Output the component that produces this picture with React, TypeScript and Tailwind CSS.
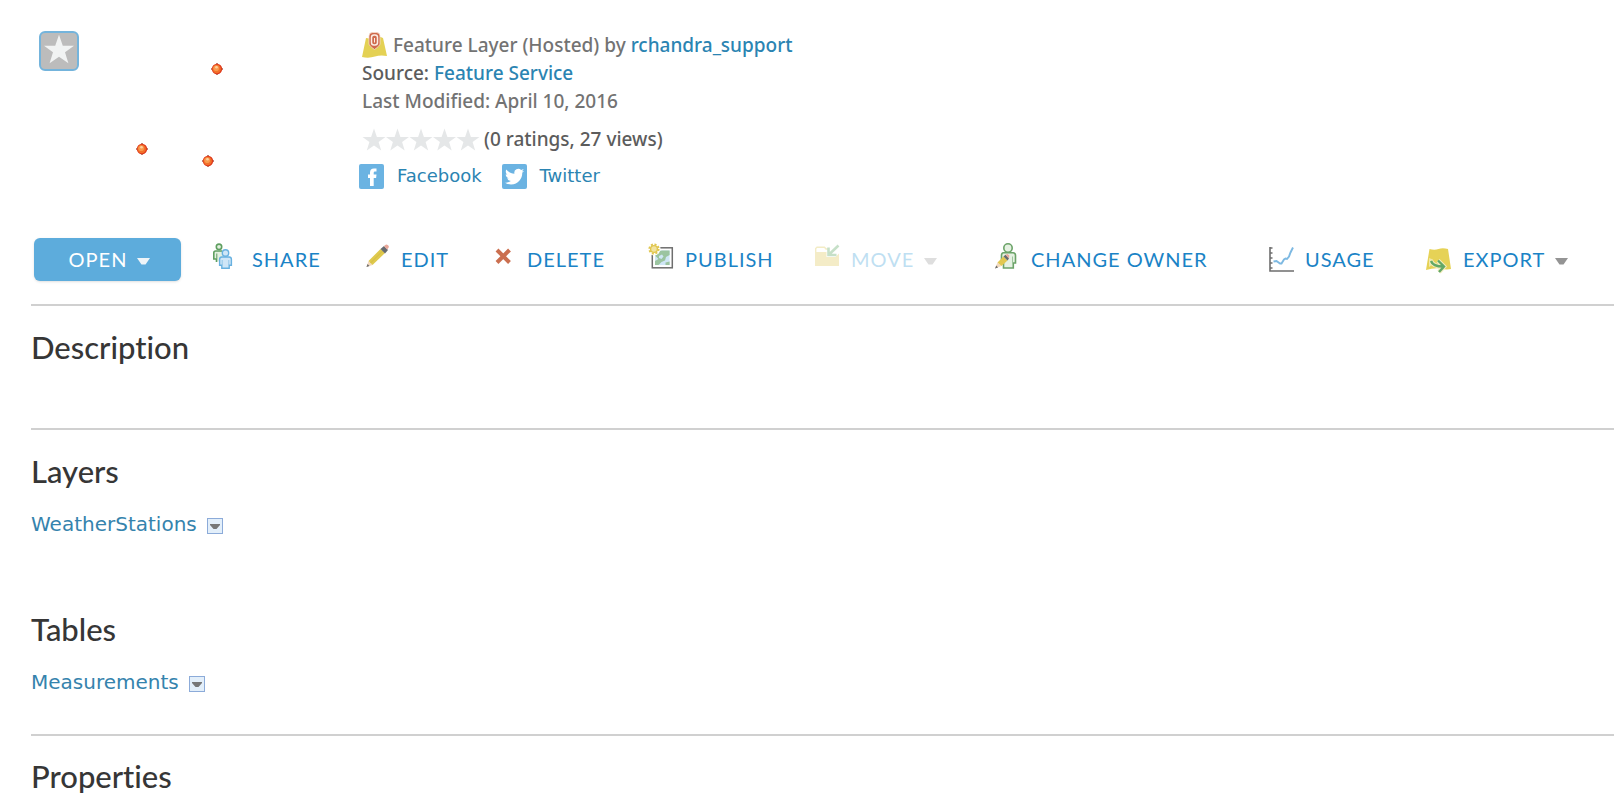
import type { ReactNode } from "react";

const STAR = "M12 0.5 L14.9 9 L23.5 9 L16.6 14 L19.2 22.5 L12 17.400 L4.800 22.5 L7.400 14 L0.5 9 L9.100 9 Z";

function Caret({ className }: { className: string }) {
  return (
    <svg width="13" height="8" viewBox="0 0 13 8" className={className} aria-hidden="true">
      <path d="M0 1h13L8.500 7.500h-4z" fill="currentColor" />
    </svg>
  );
}

function Icon({ width, children }: { width: number; children: ReactNode }) {
  return (
    <svg width={width} height="33" viewBox={`0 0 ${width} 33`} fill="none" className="shrink-0 overflow-visible" aria-hidden="true">
      {children}
    </svg>
  );
}

function ShareIcon() {
  return (
    <Icon width={28}>
      <path d="M1.800 16V9.800q0-1.800 1.800-1.800h7v6l-4 4.500H4.500V16z" fill="#e3f0e0" />
      <path d="M10 8H3.600q-1.800 0-1.800 1.800V16h2.700v3" stroke="#5f9f60" strokeWidth="1.600" />
      <path d="M4.800 10.500v5" stroke="#5f9f60" />
      <circle cx="7" cy="3.800" r="2.700" fill="#e3f0e0" stroke="#5f9f60" strokeWidth="1.600" />
      <path d="M9.800 14h7.400q2.200 0 2.200 2.200v6h-2.200v3H9.800v-3H7.600v-6q0-2.200 2.200-2.200z" fill="#cfe6f7" stroke="#68b1e0" strokeWidth="1.400" />
      <path d="M10.200 17v5M16.800 17v5" stroke="#8dc4e8" strokeWidth=".9" />
      <circle cx="13.500" cy="10" r="3.200" fill="#cfe6f7" stroke="#68b1e0" strokeWidth="1.400" />
    </Icon>
  );
}

function EditIcon() {
  return (
    <Icon width={23}>
      <path d="M0.500 24l2-6 4 4z" fill="#f2d9bd" />
      <path d="M0.500 24l1-3 2 2z" fill="#6b6b6b" />
      <path d="M2.500 18L14.500 6l4.500 4L6.500 22z" fill="#dfc94d" />
      <path d="M4.500 20L16.500 8" stroke="#d3bb42" />
      <path d="M14.500 6l3.500-3 4 4-3 3.500z" fill="#666b70" />
      <path d="M18 3l1.700-1.200q1-.6 2 .2l.8.800q.8 1 0 2L21 6.500z" fill="#e9a799" />
    </Icon>
  );
}

function DeleteIcon() {
  return (
    <Icon width={20}>
      <path d="M2 7L14.500 19.500M14.500 7L2 19.500" stroke="#cb6f4f" strokeWidth="4" />
    </Icon>
  );
}

function PublishIcon() {
  return (
    <Icon width={25}>
      <rect x="4.300" y="4.800" width="20" height="20" fill="#fff" stroke="#6e6e6e" strokeWidth="1.500" />
      <rect x="7" y="7.500" width="14.600" height="14.600" fill="#cfe6f6" />
      <path d="M14 7.500h7.600v4.500l-3.600 2-1 3.500-3.500 1.500-3 3.100H7v-4l3.500-2-3-3V9z" fill="#9bc4a0" />
      <path d="M11 13l3-1.500 1.500 2-2 2.500-2.500-1z" fill="#cfe6f6" />
      <path d="M17.500 22.100v-2.600l4.100-1v3.600z" fill="#9bc4a0" />
      <circle cx="6" cy="6" r="6.500" fill="#fff" />
      <circle cx="6" cy="6" r="4.600" stroke="#e0c64f" strokeWidth="2" strokeDasharray="2 1.600" />
      <circle cx="6" cy="6" r="3.400" fill="#f1e3a0" stroke="#e0c64f" strokeWidth="1.400" />
    </Icon>
  );
}

function MoveIcon() {
  return (
    <Icon width={24}>
      <path d="M.7 9V5.500L2 4.300h7.500L11 6h3" stroke="#f3ecc5" strokeWidth="1.400" />
      <path d="M0 9h11.500v5h9L24 10.500v12.500H0z" fill="#f4ecc7" />
      <path d="M23.500 2.500L14 11.500M13.500 4.500v7.500h8" stroke="#c6e0c8" strokeWidth="2.600" />
    </Icon>
  );
}

function OwnerIcon() {
  return (
    <Icon width={24}>
      <path d="M8.500 9.800h9.500q2.500 0 2.500 2.800v7.400h-2.200v5H8.500v-5H6.500v-7.500q0-2.700 2-2.700z" fill="#e5f1e2" stroke="#6ba368" strokeWidth="1.600" />
      <path d="M17.500 13.500v8" stroke="#9cc59b" />
      <circle cx="13" cy="5" r="4.200" fill="#e5f1e2" stroke="#6ba368" strokeWidth="1.600" />
      <path d="M0 25.500l2.500-6 4 3.500z" fill="#f2d9bd" />
      <path d="M0 25.500l1.300-3 1.800 2z" fill="#6b6b6b" />
      <path d="M2.500 19.500L8.500 13.500l4 4-6 5.500z" fill="#e2c750" />
      <path d="M8.500 13.500l2-1.800 3.500 3.800-1.500 2z" fill="#666b70" />
      <path d="M10.500 11.700l2-.8 1.800 1.600-.3 3z" fill="#e9a799" />
    </Icon>
  );
}

function UsageIcon() {
  return (
    <Icon width={24}>
      <path d="M1 4v24h24M1 5h2.500M1 10h2.500M1 15h2.500M1 20h2.500M1 25h2.500" stroke="#6e6e6e" strokeWidth="1.600" />
      <path d="M4.500 18.500l3-.5 3.500 2.500h1.500l2.500-4 1.500-1 1.500.5 2-2.500 1.500-4 2.500-5" stroke="#7db9e2" strokeWidth="1.900" />
    </Icon>
  );
}

function ExportIcon() {
  return (
    <Icon width={25}>
      <path d="M3.500 6q5 1.500 9 0 4-1.700 9.500 0L25 26q-5 1-10-.5-7-1-15 1.500z" fill="#e6d256" />
      <path d="M3 15l4 1.500-.5 5L3 24z" fill="#f0e7a8" />
      <path d="M5 18q2 5.500 12 5.500M12 17.500l6 6-5 5.500" stroke="#f3ecbc" strokeWidth="4.500" />
      <path d="M5 18q2 5.500 12 5.500M12 17.500l6 6-5 5.500" stroke="#62a866" strokeWidth="2.400" />
    </Icon>
  );
}

const actions = [
  { label: "SHARE", icon: <ShareIcon /> },
  { label: "EDIT", icon: <EditIcon /> },
  { label: "DELETE", icon: <DeleteIcon /> },
  { label: "PUBLISH", icon: <PublishIcon /> },
  { label: "MOVE", icon: <MoveIcon />, menu: true, disabled: true },
  { label: "CHANGE OWNER", icon: <OwnerIcon /> },
  { label: "USAGE", icon: <UsageIcon /> },
  { label: "EXPORT", icon: <ExportIcon />, menu: true },
];

function Toolbar() {
  return (
    <div className="grid h-[43px] grid-cols-[178px_154px_129px_153px_167px_180px_274px_157px_1fr] items-center pl-[3px] font-['Lato',sans-serif] text-[20px] leading-6 tracking-wider">
      <button className="flex h-[43px] w-[147px] items-center justify-center gap-2.5 rounded-md bg-[#5dacdc] pb-0.5 pl-1 text-white shadow">
        OPEN
        <Caret className="mt-1 text-[#eef4f8]" />
      </button>
      {actions.map((a) => (
        <button
          key={a.label}
          disabled={a.disabled}
          className={`flex items-center gap-3 whitespace-nowrap ${a.disabled ? "text-[#bfdff2]" : "text-[#1a83c6]"}`}
        >
          {a.icon}
          <span className="pb-0.5">{a.label}</span>
          {a.menu && <Caret className={a.disabled ? "mt-0.5 -ml-0.5 text-[#dedede]" : "mt-0.5 -ml-0.5 text-[#949494]"} />}
        </button>
      ))}
    </div>
  );
}

function MapPoint({ x, y }: { x: number; y: number }) {
  return (
    <g transform={`translate(${x} ${y})`}>
      <path d="M-6 0h12M0 -6v12" stroke="#b98379" strokeWidth="2" />
      <circle r="5.200" fill="#df3a1c" />
      <circle r="4.200" cx="-.3" fill="#f2702a" />
      <circle cx="-.8" cy="-.8" r="2.800" fill="#f99a4d" />
      <circle cx="-.5" cy="-1.800" r="1.300" fill="#fdd0a0" />
    </g>
  );
}

function Thumbnail() {
  return (
    <div className="relative w-[328px] shrink-0">
      <svg width="200" height="150" viewBox="0 0 200 150" role="img" aria-label="Map thumbnail">
        <MapPoint x={186} y={40} />
        <MapPoint x={111} y={120} />
        <MapPoint x={177} y={132} />
      </svg>
      <button
        aria-label="Add to favorites"
        className="absolute top-0.5 left-2 flex size-10 items-center justify-center rounded-md border-2 border-[#74b4dc] bg-[#bcbcbc] pb-1"
      >
        <svg width="32" height="30" viewBox="0 0 24 23" aria-hidden="true">
          <path d={STAR} fill="#f1f3f3" />
        </svg>
      </button>
    </div>
  );
}

function Details() {
  return (
    <div className="pt-0.5 font-['Noto_Sans',sans-serif] text-[19px] leading-7 font-medium text-[#737373]">
      <div className="flex items-center gap-1.5 pl-[3px]">
        <svg width="25" height="26" viewBox="0 0 25 26" aria-hidden="true">
          <path d="M4 6q4 1 8-.5 5-1.500 9 .5l4 18q-7-1-12 .5-6 2-13 .5z" fill="#e4d154" />
          <path d="M7 4q0-3.500 3.500-3.500h4Q18 .5 18 4v8q0 1.500-5.500 5.500Q7 13.500 7 12z" fill="#cf6a4c" stroke="#f6dccb" strokeWidth=".8" />
          <rect x="9.500" y="3" width="6" height="10" rx="2.500" stroke="#fbeee6" strokeWidth="1.500" fill="none" />
          <path d="M12.500 6v4.500" stroke="#fbeee6" strokeWidth="1" />
        </svg>
        <span>
          Feature Layer (Hosted) by{" "}
          <a href="#owner" className="text-[#2b84b2]">rchandra_support</a>
        </span>
      </div>
      <div className="pl-[3px] text-[#5c5c5c]">
        Source: <a href="#service" className="text-[#2b84b2]">Feature Service</a>
      </div>
      <div className="pl-[3px]">Last Modified: April 10, 2016</div>
      <div className="mt-2.5 flex items-center gap-1 pl-[3px] text-[#5c5c5c]">
        <svg width="118" height="24" viewBox="0 -1 118 24" role="img" aria-label="Rated 0 of 5">
          {[0, 1, 2, 3, 4].map((i) => (
            <path key={i} d={STAR} transform={`translate(${i * 23.5} 0)`} fill="#e5e7e8" />
          ))}
        </svg>
        <span>(0 ratings, 27 views)</span>
      </div>
      <div className="mt-[9px] flex gap-5 font-['DejaVu_Sans',sans-serif] text-[18px] font-normal text-[#2b84b2]">
        <a href="#facebook" className="flex items-center gap-3">
          <svg width="26" height="25" viewBox="0 0 26 25" aria-hidden="true">
            <rect width="25" height="25" rx="2" fill="#6bb3e2" />
            <path d="M11 22v-8H9v-3.500h2V8.500q0-4 4-4h2.500v3H16q-1.300 0-1.300 1.300v1.700h2.800l-.4 3.500h-2.400v8z" fill="#fff" />
          </svg>
          Facebook
        </a>
        <a href="#twitter" className="flex items-center gap-3">
          <svg width="26" height="25" viewBox="0 0 26 25" aria-hidden="true">
            <rect width="25" height="25" rx="2" fill="#6bb3e2" />
            <path
              transform="translate(3 3) scale(.8)"
              d="M23.950 4.570a10 10 0 0 1-2.820.770 4.960 4.960 0 0 0 2.160-2.720c-.950.550-2 .950-3.130 1.190a4.920 4.920 0 0 0-8.380 4.480C7.690 8.090 4.070 6.130 1.640 3.160a4.820 4.820 0 0 0-.670 2.480c0 1.710.870 3.210 2.190 4.100a4.900 4.900 0 0 1-2.230-.620v.060a4.920 4.920 0 0 0 3.950 4.830 5 5 0 0 1-2.210.080 4.940 4.940 0 0 0 4.600 3.420A9.870 9.870 0 0 1 0 19.540a13.990 13.990 0 0 0 7.560 2.210c9.050 0 14-7.500 14-13.980 0-.210 0-.420-.020-.630a9.940 9.940 0 0 0 2.410-2.570z"
              fill="#fff"
            />
          </svg>
          Twitter
        </a>
      </div>
    </div>
  );
}

function Heading({ children }: { children: ReactNode }) {
  return (
    <h2 className="font-['Lato',sans-serif] text-[31px] leading-9 font-medium text-[#363636] [font-variant-ligatures:none]">
      {children}
    </h2>
  );
}

function LayerItem({ name }: { name: string }) {
  return (
    <div className="mt-[21px] flex items-center gap-2.5 font-['DejaVu_Sans',sans-serif] text-[20px] leading-7">
      <a href={`#${name}`} className="text-[#3583ad]">{name}</a>
      <button
        aria-label={`${name} options`}
        className="mt-1 flex size-4 items-center justify-center border border-[#8cabd9] bg-[#e3effa] text-[#777]"
      >
        <svg width="10" height="5" viewBox="0 0 10 5" className="shrink-0" aria-hidden="true">
          <path d="M0 0h10v1L6.500 5h-3L0 1z" fill="currentColor" />
        </svg>
      </button>
    </div>
  );
}

export default function App() {
  return (
    <main className="min-h-screen overflow-x-hidden bg-white pb-2.5 pl-[31px]">
      <header className="flex h-[238px] pt-[29px]">
        <Thumbnail />
        <Details />
      </header>
      <Toolbar />
      <section className="mt-[23px] border-t-2 border-[#d0d0d0] pt-[23px] pb-[63px]">
        <Heading>Description</Heading>
      </section>
      <section className="border-t-2 border-[#d0d0d0] pt-[23px] pb-[38px]">
        <Heading>Layers</Heading>
        <LayerItem name="WeatherStations" />
        <div className="mt-[73px]">
          <Heading>Tables</Heading>
          <LayerItem name="Measurements" />
        </div>
      </section>
      <section className="border-t-2 border-[#d0d0d0] pt-[22px]">
        <Heading>Properties</Heading>
      </section>
    </main>
  );
}
